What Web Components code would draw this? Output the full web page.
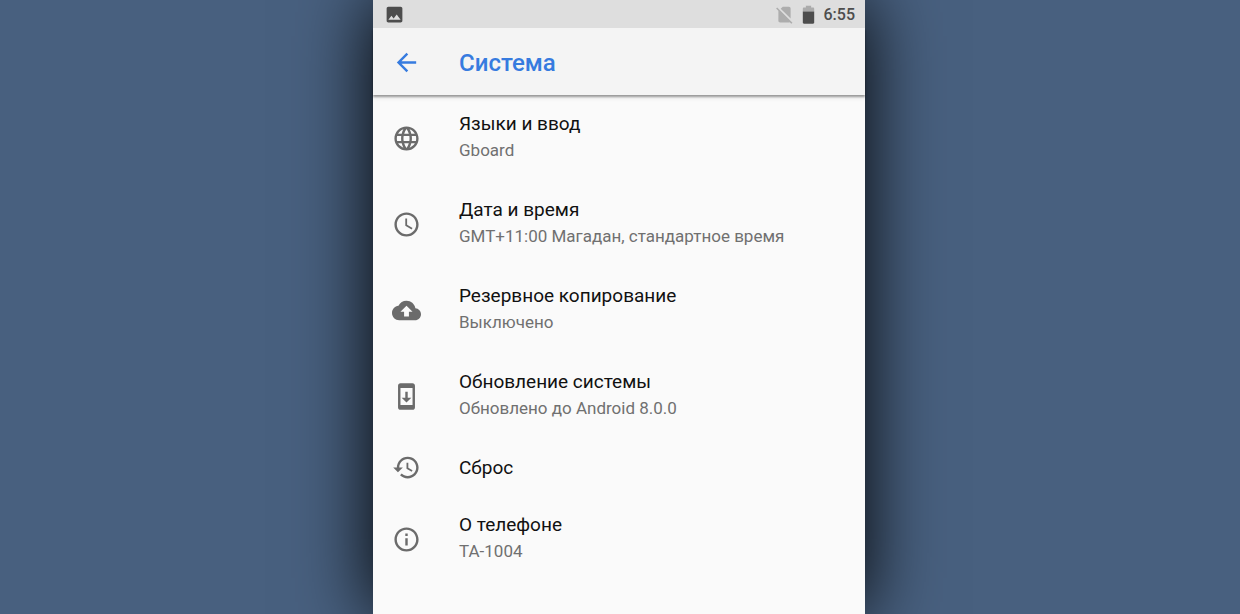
<!DOCTYPE html>
<html lang="ru">
<head>
<meta charset="utf-8">
<meta name="viewport" content="width=device-width, initial-scale=1">
<title>Система</title>
<style>
  html { height: 100%; }
  body {
    margin: 0;
    min-height: 100%;
    display: flex;
    overflow-x: hidden;
    background: #48607f;
    font-family: Roboto, "Noto Sans", sans-serif;
  }
</style>
</head>
<body>
<settings-screen></settings-screen>

<script>
const icons = {
  globe: '<path d="M11.99 2C6.47 2 2 6.48 2 12s4.47 10 9.99 10C17.52 22 22 17.52 22 12S17.52 2 11.99 2zm6.93 6h-2.95c-.32-1.25-.78-2.45-1.38-3.56 1.84.63 3.37 1.91 4.33 3.56zM12 4.04c.83 1.2 1.48 2.53 1.91 3.96h-3.82c.43-1.43 1.08-2.76 1.91-3.96zM4.26 14C4.1 13.36 4 12.69 4 12s.1-1.36.26-2h3.38c-.08.66-.14 1.32-.14 2s.06 1.34.14 2H4.26zm.82 2h2.95c.32 1.25.78 2.45 1.38 3.56-1.84-.63-3.37-1.9-4.33-3.56zm2.95-8H5.08c.96-1.66 2.49-2.93 4.33-3.56C8.81 5.55 8.35 6.75 8.03 8zM12 19.96c-.83-1.2-1.48-2.53-1.91-3.96h3.82c-.43 1.43-1.08 2.76-1.91 3.96zM14.34 14H9.66c-.09-.66-.16-1.32-.16-2s.07-1.35.16-2h4.68c.09.65.16 1.32.16 2s-.07 1.34-.16 2zm.25 5.56c.6-1.11 1.06-2.31 1.38-3.56h2.95c-.96 1.65-2.49 2.93-4.33 3.56zM16.36 14c.08-.66.14-1.32.14-2s-.06-1.34-.14-2h3.38c.16.64.26 1.31.26 2s-.1 1.36-.26 2h-3.38z"/>',
  clock: '<path d="M11.99 2C6.47 2 2 6.48 2 12s4.47 10 9.99 10C17.52 22 22 17.52 22 12S17.52 2 11.99 2zM12 20c-4.42 0-8-3.58-8-8s3.58-8 8-8 8 3.58 8 8-3.58 8-8 8zm.5-13H11v6l5.25 3.15.75-1.23-4.5-2.67z"/>',
  cloud: '<path d="M19.35 10.04C18.67 6.59 15.64 4 12 4 9.11 4 6.6 5.64 5.35 8.04 2.34 8.36 0 10.91 0 14c0 3.31 2.69 6 6 6h13c2.76 0 5-2.24 5-5 0-2.64-2.05-4.78-4.65-4.96zM14 13v4h-4v-4H7l5-5 5 5h-3z"/>',
  update: '<path d="M17 1.01L7 1c-1.1 0-2 .9-2 2v18c0 1.1.9 2 2 2h10c1.1 0 2-.9 2-2V3c0-1.1-.9-1.99-2-1.99zM17 19H7V5h10v14zm-1-6h-3V8h-2v5H8l4 4 4-4z"/>',
  restore: '<path d="M13 3c-4.97 0-9 4.03-9 9H1l3.89 3.89.07.14L9 12H6c0-3.87 3.13-7 7-7s7 3.13 7 7-3.13 7-7 7c-1.93 0-3.68-.79-4.94-2.06l-1.42 1.42C8.27 19.99 10.51 21 13 21c4.97 0 9-4.03 9-9s-4.03-9-9-9zm-1 5v5l4.28 2.54.72-1.21-3.5-2.08V8H12z"/>',
  info: '<path d="M11 17h2v-6h-2v6zm1-15C6.48 2 2 6.48 2 12s4.48 10 10 10 10-4.48 10-10S17.52 2 12 2zm0 18c-4.41 0-8-3.59-8-8s3.59-8 8-8 8 3.59 8 8-3.59 8-8 8zM11 9h2V7h-2v2z"/>',
  back: '<path d="M20 11H7.83l5.59-5.59L12 4l-8 8 8 8 1.41-1.41L7.83 13H20v-2z"/>',
  picture: '<path d="M21 19V5c0-1.1-.9-2-2-2H5c-1.1 0-2 .9-2 2v14c0 1.1.9 2 2 2h14c1.1 0 2-.9 2-2zM8.5 13.5l2.5 3.01L14.5 12l4.5 6H5l3.5-4.5z"/>',
  nosim: '<path d="M18.99 5c0-1.1-.89-2-1.99-2h-7L7.66 5.34 19 16.68 18.99 5zM3.65 3.88L2.38 5.15 5 7.77V19c0 1.1.9 2 2 2h10.01c.35 0 .67-.1.96-.26l1.88 1.88 1.27-1.27L3.65 3.88z"/>',
  battery: '<path opacity=".35" d="M18.5 5.3c0-.7-.6-1.3-1.3-1.3H15V2H9v2H6.800c-.7 0-1.300.6-1.300 1.300V8.500h13V5.300z"/><path d="M5.500 8.500v12.700c0 .7.600 1.300 1.300 1.300h10.400c.7 0 1.300-.6 1.300-1.300V8.500h-13z"/>'
};

class SvgIcon extends HTMLElement {
  connectedCallback() {
    const root = this.attachShadow({ mode: 'open' });
    root.innerHTML = `
      <style>
        :host { display: block; flex: none; width: var(--icon-size, 29px); height: var(--icon-size, 29px); }
        svg { display: block; width: 100%; height: 100%; fill: currentColor; }
      </style>
      <svg viewBox="0 0 24 24" aria-hidden="true">${icons[this.getAttribute('name')]}</svg>`;
  }
}
customElements.define('svg-icon', SvgIcon);

class StatusBar extends HTMLElement {
  constructor() {
    super();
    this.attachShadow({ mode: 'open' }).innerHTML = `
      <style>
        :host {
          display: flex; align-items: center; justify-content: space-between;
          height: 28px; padding: 0 10px 0 11px;
          background: #dedede; color: #4d4d4d; --icon-size: 21px;
        }
        .right { display: flex; align-items: center; gap: 3px; }
        .sim { color: #adadad; }
        time { margin-left: 2px; font-size: 16px; line-height: 26px; font-weight: 500; padding-top: 2px; }
      </style>
      <svg-icon name="picture"></svg-icon>
      <div class="right">
        <svg-icon class="sim" name="nosim"></svg-icon>
        <svg-icon name="battery"></svg-icon>
        <time><slot></slot></time>
      </div>`;
  }
}
customElements.define('status-bar', StatusBar);

class AppBar extends HTMLElement {
  constructor() {
    super();
    this.attachShadow({ mode: 'open' }).innerHTML = `
      <style>
        :host {
          display: flex; align-items: center;
          height: 67px; padding-left: 19px;
          background: #f4f4f4; color: #367bdf;
          box-shadow: 0 2px 2px rgba(0, 0, 0, .36), 0 4px 4px rgba(0, 0, 0, .05);
        }
        button { display: block; margin: 0 38px 0 0; padding: 1px 0 0; border: 0; background: none; color: inherit; cursor: pointer; }
        h1 { margin: 0; padding-top: 3px; font-size: 24px; line-height: 32px; font-weight: 500; }
      </style>
      <button type="button" aria-label="Назад"><svg-icon name="back"></svg-icon></button>
      <h1><slot></slot></h1>`;
  }
}
customElements.define('app-bar', AppBar);

class SettingsItem extends HTMLElement {
  constructor() {
    super();
    this.attachShadow({ mode: 'open' });
  }
  connectedCallback() {
    const single = !this.querySelector('[slot="summary"]');
    this.shadowRoot.innerHTML = `
      <style>
        :host { display: block; }
        a {
          display: flex; align-items: center; gap: 38px;
          min-height: ${single ? 57 : 86}px; padding: 0 19px;
          color: #6b6b6b; text-decoration: none;
        }
        .title { font-size: 19px; line-height: 27px; color: #111; }
        .summary { padding-bottom: 4px; font-size: 17px; line-height: 26px; color: #707070; }
      </style>
      <a href="#">
        <svg-icon name="${this.getAttribute('icon')}"></svg-icon>
        <div>
          <div class="title"><slot></slot></div>
          ${single ? '' : '<div class="summary"><slot name="summary"></slot></div>'}
        </div>
      </a>`;
  }
}
customElements.define('settings-item', SettingsItem);

class SettingsScreen extends HTMLElement {
  constructor() {
    super();
    this.attachShadow({ mode: 'open' }).innerHTML = `
      <style>
        :host {
          display: block; width: 100%; max-width: 492px;
          margin: 0 auto; position: relative; right: 1px;
          background: #fafafa;
          box-shadow: 0 0 72px #000;
        }
      </style>
      <status-bar>6:55</status-bar>
      <app-bar>Система</app-bar>
      <main>
        <settings-item icon="globe">Языки и ввод<span slot="summary">Gboard</span></settings-item>
        <settings-item icon="clock">Дата и время<span slot="summary">GMT+11:00 Магадан, стандартное время</span></settings-item>
        <settings-item icon="cloud">Резервное копирование<span slot="summary">Выключено</span></settings-item>
        <settings-item icon="update">Обновление системы<span slot="summary">Обновлено до Android 8.0.0</span></settings-item>
        <settings-item icon="restore">Сброс</settings-item>
        <settings-item icon="info">О телефоне<span slot="summary">TA-1004</span></settings-item>
      </main>`;
  }
}
customElements.define('settings-screen', SettingsScreen);
</script>
</body>
</html>
